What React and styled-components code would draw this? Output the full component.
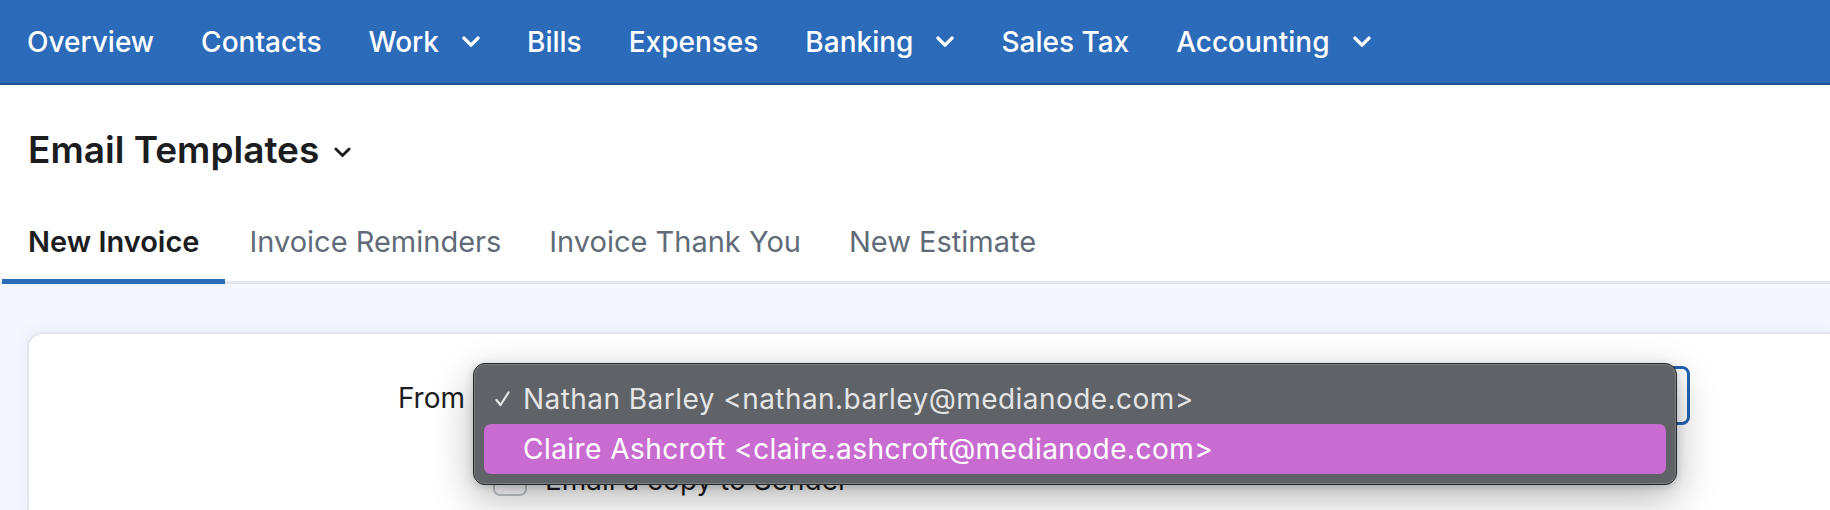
import React from 'react';
import styled, { createGlobalStyle } from 'styled-components';

const Global = createGlobalStyle`
  html, body { margin: 0; padding: 0; background: #fff; }
  body {
    font-family: Inter, "Noto Sans", sans-serif;
    width: 1830px;
    height: 510px;
    overflow: hidden;
    -webkit-font-smoothing: antialiased;
  }
  * { box-sizing: border-box; }
`;

const Page = styled.div`
  display: flex;
  flex-direction: column;
  height: 510px;
`;

const Nav = styled.nav`
  height: 85px;
  flex: none;
  background: #2b6bb9;
  border-bottom: 2px solid #1e528f;
  display: flex;
  align-items: center;
  padding: 0 0 0 27px;
  gap: 47px;
`;

const NavItem = styled.a`
  color: #fff;
  font-size: 28px;
  font-weight: 500;
  line-height: 36px;
  display: flex;
  align-items: center;
  gap: 23px;
  text-decoration: none;
`;

const Chevron = ({ size = 18, stroke = 3.4 }) => (
  <svg width={size} height={size * 0.62} viewBox="0 0 18 11" fill="none">
    <path d="M2 2 L9 9 L16 2" stroke="currentColor" strokeWidth={stroke} strokeLinecap="round" strokeLinejoin="round" />
  </svg>
);

const Header = styled.header`
  padding: 43px 0 0 28px;
  flex: none;
`;

const Title = styled.h1`
  margin: 0;
  font-size: 37px;
  line-height: 44px;
  font-weight: 600;
  color: #1c1d1f;
  display: flex;
  align-items: center;
  gap: 15px;
  svg { margin-top: 4px; }
`;

const TabBar = styled.div`
  margin-top: 52px;
  display: flex;
  padding-left: 2px;
  border-bottom: 3px solid #e3e7ed;
  flex: none;
`;

const Tab = styled.div`
  padding: 0 24px 19px;
  margin-bottom: -3px;
  font-size: 29px;
  line-height: 36px;
  font-weight: ${p => (p.$active ? 600 : 400)};
  color: ${p => (p.$active ? '#1c1d1f' : '#5f6b78')};
  border-bottom: 5px solid ${p => (p.$active ? '#2b6bb9' : 'transparent')};
  &:first-child { padding: 0 26px 19px; }
`;

const Content = styled.main`
  flex: 1;
  background: #f4f7fd;
  padding: 48px 0 0 27px;
  display: flex;
`;

const Card = styled.section`
  flex: 1;
  background: #fff;
  border: 2px solid #e3e6ec;
  border-right: none;
  border-bottom: none;
  border-radius: 16px 0 0 0;
  box-shadow: 0 0 14px rgba(120, 140, 180, 0.12);
  padding: 32px 0 0 0;
  display: grid;
  grid-template-columns: 436px 1212px;
  column-gap: 13px;
  row-gap: 38px;
  align-content: start;
`;

const Label = styled.label`
  justify-self: end;
  align-self: center;
  font-size: 28px;
  line-height: 34px;
  color: #1c1d1f;
  margin-top: 4px;
`;

const SelectWrap = styled.div`
  position: relative;
  height: 59px;
`;

const SelectBox = styled.div`
  height: 59px;
  border: 3px solid #2563b0;
  border-radius: 8px;
  background: #fff;
`;

const Popup = styled.div`
  position: absolute;
  left: -5px;
  top: -3px;
  width: 1204px;
  padding: 10px;
  background: #5f6266;
  border: 1px solid #262729;
  border-radius: 12px;
  box-shadow: inset 0 0 0 1px rgba(255, 255, 255, 0.18), 0 14px 40px rgba(0, 0, 0, 0.28), 0 2px 8px rgba(0, 0, 0, 0.18);
  display: flex;
  flex-direction: column;
  z-index: 5;
`;

const Option = styled.div`
  height: 50px;
  display: flex;
  align-items: center;
  padding-left: 11px;
  border-radius: 7px;
  font-size: 28px;
  letter-spacing: 0.45px;
  color: ${p => (p.$highlight ? '#ffffff' : '#e4e4e5')};
  background: ${p => (p.$highlight ? '#c96cd1' : 'transparent')};
  white-space: nowrap;
`;

const CheckSlot = styled.span`
  width: 28px;
  flex: none;
  display: flex;
  align-items: center;
  color: #e4e4e5;
`;

const CheckRow = styled.div`
  grid-column: 2;
  display: flex;
  align-items: center;
  gap: 18px;
  padding-left: 15px;
  font-size: 28px;
  color: #1c1d1f;
`;

const CheckBox = styled.span`
  width: 34px;
  height: 32px;
  border: 2px solid #c3c7cc;
  border-radius: 7px;
  flex: none;
`;

const navItems = [
  { label: 'Overview' },
  { label: 'Contacts' },
  { label: 'Work', menu: true },
  { label: 'Bills' },
  { label: 'Expenses' },
  { label: 'Banking', menu: true },
  { label: 'Sales Tax' },
  { label: 'Accounting', menu: true },
];

const tabs = ['New Invoice', 'Invoice Reminders', 'Invoice Thank You', 'New Estimate'];

export default function App() {
  return (
    <Page>
      <Global />
      <Nav>
        {navItems.map(item => (
          <NavItem key={item.label}>
            {item.label}
            {item.menu && <Chevron />}
          </NavItem>
        ))}
      </Nav>
      <Header>
        <Title>
          Email Templates
          <Chevron size={17} stroke={3} />
        </Title>
      </Header>
      <TabBar>
        {tabs.map((t, i) => (
          <Tab key={t} $active={i === 0}>{t}</Tab>
        ))}
      </TabBar>
      <Content>
        <Card>
          <Label>From</Label>
          <SelectWrap>
            <SelectBox />
            <Popup>
              <Option>
                <CheckSlot>
                  <svg width="15" height="16" viewBox="0 0 15 16" fill="none">
                    <path d="M1.5 9 L5.5 14 L13.5 1.5" stroke="currentColor" strokeWidth="2.3" strokeLinecap="round" strokeLinejoin="round" />
                  </svg>
                </CheckSlot>
                Nathan Barley &lt;nathan.barley@medianode.com&gt;
              </Option>
              <Option $highlight>
                <CheckSlot />
                Claire Ashcroft &lt;claire.ashcroft@medianode.com&gt;
              </Option>
            </Popup>
          </SelectWrap>
          <CheckRow>
            <CheckBox />
            Email a copy to Sender
          </CheckRow>
        </Card>
      </Content>
    </Page>
  );
}
